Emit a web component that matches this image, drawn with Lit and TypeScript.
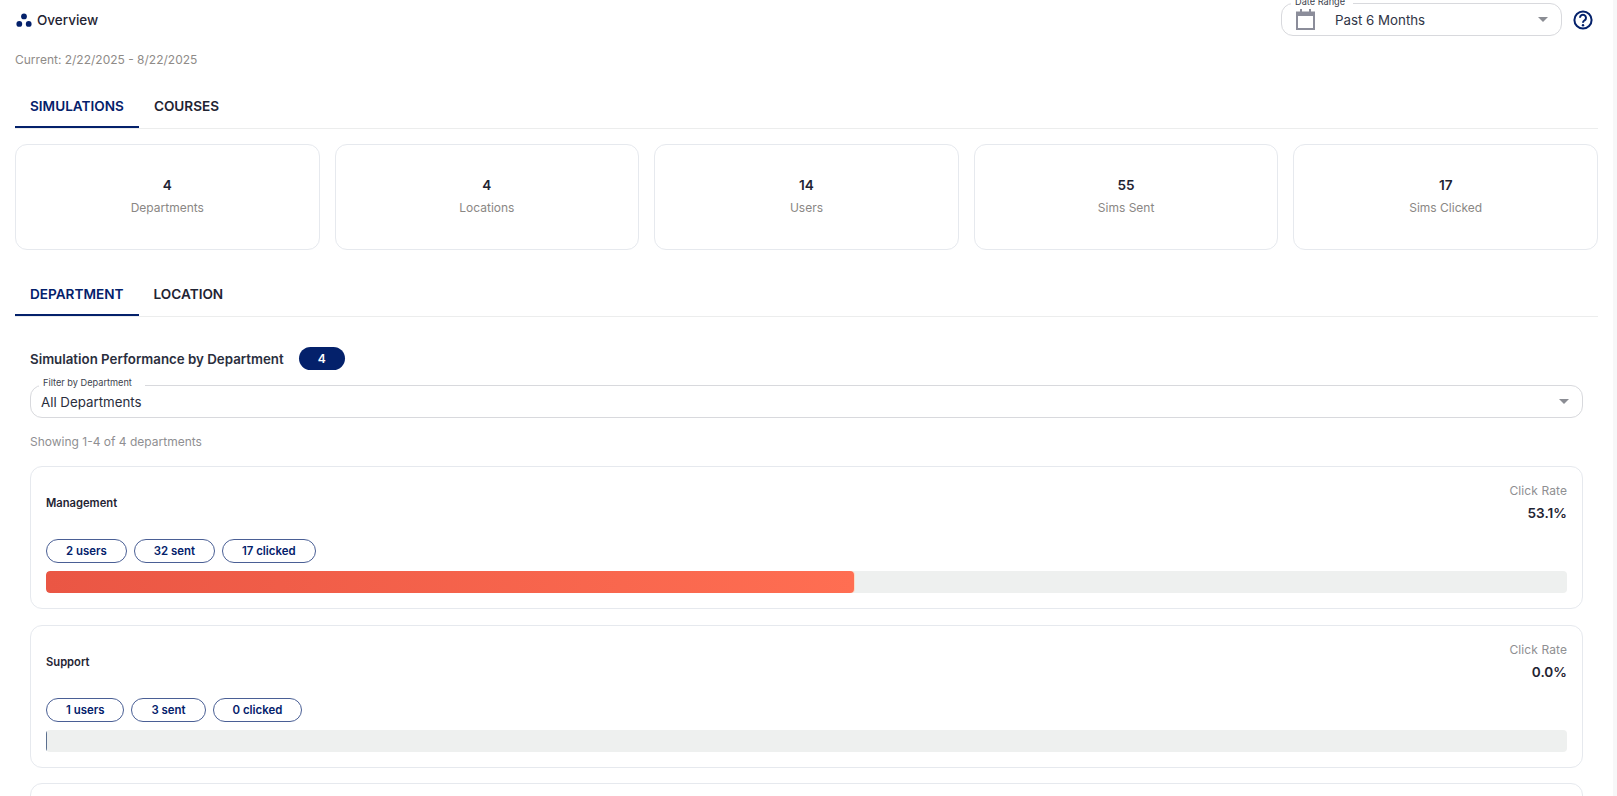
import { LitElement, html, css, svg } from "lit";
import { customElement } from "lit/decorators.js";

const stats = [
  ["4", "Departments"],
  ["4", "Locations"],
  ["14", "Users"],
  ["55", "Sims Sent"],
  ["17", "Sims Clicked"],
];

const departments = [
  { name: "Management", rate: 53.1, users: 2, sent: 32, clicked: 17 },
  { name: "Support", rate: 0, users: 1, sent: 3, clicked: 0 },
];

const caret = svg`<svg class="caret" width="10" height="5" viewBox="0 0 10 5"><path d="M0 0h10L5 5z" fill="#8b8d94"/></svg>`;

@customElement("app-root")
export class AppRoot extends LitElement {
  static styles = css`
    :host {
      display: block;
      height: 796px;
      overflow: hidden;
      font-family: Inter, "Liberation Sans", sans-serif;
      color: #1f2433;
      background: #fff;
    }
    .shell {
      display: flex;
    }
    .content {
      flex: 1;
      min-width: 0;
      padding: 3px 15px 0 15px;
      box-sizing: border-box;
    }
    .rail {
      width: 4px;
      height: 796px;
      background: #f7f7f8;
    }
    .top {
      display: flex;
      align-items: center;
      justify-content: space-between;
      height: 33px;
    }
    .title {
      display: flex;
      align-items: center;
      gap: 5px;
      font-size: 13.5px;
      font-weight: 500;
      line-height: 32px;
    }
    .actions {
      display: flex;
      align-items: center;
      gap: 11px;
      margin-right: 5px;
    }
    .date {
      position: relative;
      width: 281px;
      height: 33px;
      box-sizing: border-box;
      border: 1px solid #d8d9dd;
      border-radius: 12px;
      display: flex;
      align-items: center;
      padding: 0 13px 0 14px;
      font-size: 13.3px;
      color: #2f3446;
    }
    .date .val {
      margin-left: 20px;
      flex: 1;
    }
    .legend {
      position: absolute;
      background: #fff;
      font-size: 9.2px;
      line-height: 10px;
      color: #3b3f4d;
    }
    .date .legend {
      left: 9px;
      top: -7px;
      padding: 0 8px 0 4px;
    }
    .current {
      font-size: 12px;
      color: #8f8b88;
      margin-top: 16px;
      line-height: 16px;
    }
    .tabs {
      display: flex;
      border-bottom: 1px solid #eceded;
      box-sizing: border-box;
      height: 46px;
    }
    .tabs.main {
      margin-top: 15px;
    }
    .tabs.sub {
      margin-top: 21px;
    }
    .tab {
      padding: 3px 15px 0;
      font-size: 13.6px;
      font-weight: 600;
      line-height: 40px;
      height: 45px;
      box-sizing: border-box;
      color: #1f2433;
    }
    .tab.active {
      color: #04216b;
      border-bottom: 2px solid #04216b;
    }
    .stats {
      display: grid;
      grid-template-columns: repeat(5, 1fr);
      gap: 15px;
      margin-top: 15px;
    }
    .stat {
      height: 106px;
      box-sizing: border-box;
      border: 1px solid #e6e9ee;
      border-radius: 12px;
      padding-bottom: 3px;
      display: flex;
      flex-direction: column;
      align-items: center;
      justify-content: center;
    }
    .stat b {
      font-size: 13.6px;
      font-weight: 600;
      line-height: 20px;
    }
    .stat span {
      font-size: 12px;
      color: #8a8784;
      line-height: 16px;
      margin-top: 5px;
    }
    .panel {
      padding: 0 15px;
    }
    .heading {
      display: flex;
      align-items: center;
      gap: 15px;
      margin-top: 30px;
      height: 23px;
    }
    .heading h2 {
      margin: 0;
      font-size: 13.3px;
      font-weight: 600;
      color: #2a2e3d;
    }
    .count {
      width: 46px;
      height: 23px;
      border-radius: 12px;
      background: #04216b;
      color: #fff;
      font-size: 12px;
      font-weight: 600;
      display: flex;
      align-items: center;
      justify-content: center;
    }
    .filter {
      position: relative;
      margin-top: 15px;
      height: 33px;
      box-sizing: border-box;
      border: 1px solid #d8d9dd;
      border-radius: 12px;
      display: flex;
      align-items: center;
      justify-content: space-between;
      padding: 0 13px 0 10px;
      font-size: 13.3px;
      color: #2a2e3d;
    }
    .filter .legend {
      left: 8px;
      top: -8px;
      padding: 0 13px 0 4px;
    }
    .showing {
      font-size: 12px;
      color: #8f8f92;
      line-height: 16px;
      margin-top: 16px;
    }
    .card {
      border: 1px solid #e6e9ee;
      border-radius: 12px;
      box-sizing: border-box;
      padding: 15px;
      margin-top: 16px;
      display: flex;
      flex-direction: column;
    }
    .card-head {
      display: flex;
      justify-content: space-between;
      align-items: center;
      height: 41px;
    }
    .card-head .name {
      font-size: 11.2px;
      font-weight: 600;
      color: #1f2433;
    }
    .rate {
      text-align: right;
    }
    .rate small {
      display: block;
      font-size: 12px;
      letter-spacing: 0.1px;
      line-height: 18px;
      color: #8f8f92;
    }
    .rate b {
      display: block;
      font-size: 13.6px;
      font-weight: 600;
      line-height: 20px;
      margin-top: 3px;
    }
    .chips {
      display: flex;
      gap: 7px;
      margin-top: 16px;
    }
    .chip {
      height: 24px;
      box-sizing: border-box;
      padding: 0 19px;
      border: 1px solid #4a5f95;
      border-radius: 12px;
      display: flex;
      align-items: center;
      font-size: 11.4px;
      font-weight: 600;
      color: #04216b;
    }
    .bar {
      margin-top: 8px;
      height: 22px;
      background: #eef0ef;
      border-radius: 4px;
      overflow: hidden;
      flex: none;
    }
    .fill {
      height: 100%;
      min-width: 1px;
      border-radius: 4px;
      background: linear-gradient(90deg, #ea5644, #ff6e52);
      box-shadow: 1px 0 0 #fbdcc6;
    }
    .fill.zero {
      background: #5b6f8f;
      border-radius: 0;
      box-shadow: none;
    }
    .stub {
      height: 60px;
      margin-top: 15px;
    }
  `;

  render() {
    return html`<div class="shell">
      <div class="content">
        <div class="top">
          <div class="title">
            <svg width="17" height="14" viewBox="0 0 17 14" fill="#04216b">
              <circle cx="9" cy="3.4" r="2.9" />
              <circle cx="4.3" cy="10.9" r="2.9" />
              <circle cx="13.7" cy="10.9" r="2.9" />
            </svg>
            Overview
          </div>
          <div class="actions">
            <div class="date">
              <span class="legend">Date Range</span>
              <svg width="19" height="21" viewBox="0 0 19 21">
                <path d="M1 3.5h17v16.5H1z" fill="none" stroke="#8b8d9a" stroke-width="2" />
                <path d="M1 3h17v4H1zM4 0h2v3H4zM13 0h2v3h-2z" fill="#8b8d9a" />
              </svg>
              <span class="val">Past 6 Months</span>
              ${caret}
            </div>
            <svg width="20" height="20" viewBox="0 0 20 20">
              <circle cx="10" cy="10" r="8.6" fill="none" stroke="#04216b" stroke-width="2" />
              <path
                d="M7 7.8a3 3 0 1 1 4.6 2.5c-1 .7-1.6 1.2-1.6 2.4"
                fill="none"
                stroke="#04216b"
                stroke-width="2"
              />
              <circle cx="10" cy="15.2" r="1.2" fill="#04216b" />
            </svg>
          </div>
        </div>
        <div class="current">Current: 2/22/2025 - 8/22/2025</div>
        <div class="tabs main">
          <div class="tab active">SIMULATIONS</div>
          <div class="tab">COURSES</div>
        </div>
        <div class="stats">
          ${stats.map(([v, l]) => html`<div class="stat"><b>${v}</b><span>${l}</span></div>`)}
        </div>
        <div class="tabs sub">
          <div class="tab active">DEPARTMENT</div>
          <div class="tab">LOCATION</div>
        </div>
        <div class="panel">
          <div class="heading">
            <h2>Simulation Performance by Department</h2>
            <div class="count">4</div>
          </div>
          <div class="filter">
            <span class="legend">Filter by Department</span>
            <span>All Departments</span>
            ${caret}
          </div>
          <div class="showing">Showing 1-4 of 4 departments</div>
          ${departments.map(
            (d) => html`<div class="card">
              <div class="card-head">
                <div class="name">${d.name}</div>
                <div class="rate">
                  <small>Click Rate</small>
                  <b>${d.rate.toFixed(1)}%</b>
                </div>
              </div>
              <div class="chips">
                <div class="chip">${d.users} users</div>
                <div class="chip">${d.sent} sent</div>
                <div class="chip">${d.clicked} clicked</div>
              </div>
              <div class="bar">
                <div class="fill ${d.rate === 0 ? "zero" : ""}" style="width:${d.rate}%"></div>
              </div>
            </div>`
          )}
          <div class="card stub"></div>
        </div>
      </div>
      <div class="rail"></div>
    </div>`;
  }
}
